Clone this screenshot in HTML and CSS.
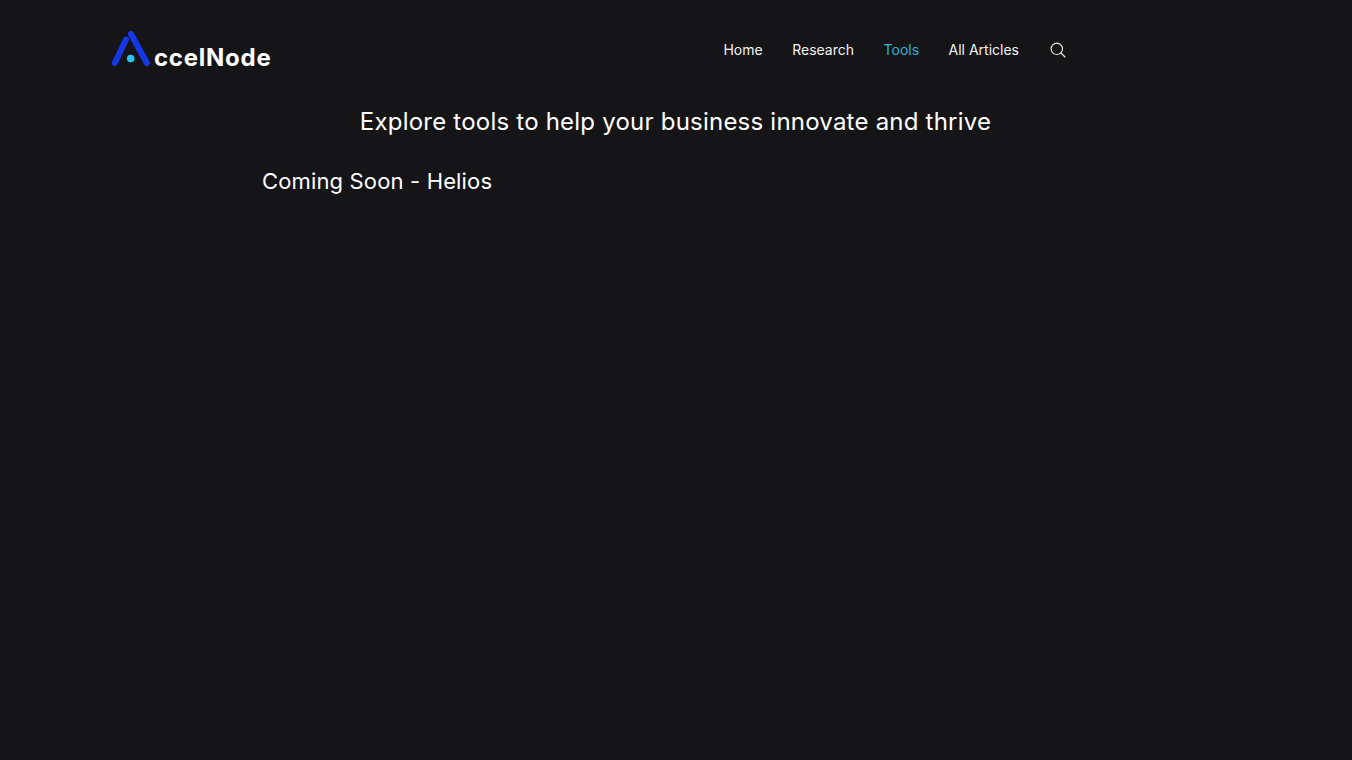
FILE: index.html
```html
<!DOCTYPE html>
<html lang="en">
<head>
<meta charset="utf-8">
<title>AccelNode Tools</title>
<link rel="stylesheet" href="styles.css">
</head>
<body>
<header class="header">
  <a class="logo" href="#">
    <svg class="logo-mark" width="40" height="38" viewBox="0 0 40 38" aria-hidden="true">
      <path d="M3.800 33 L15 9.500" class="logo-stroke"/>
      <path d="M20 4 L36 33.200" class="logo-stroke"/>
      <circle cx="19.700" cy="28.500" r="3.800" fill="#29c5f0"/>
    </svg>
    <span class="logo-text">ccelNode</span>
  </a>
  <nav class="nav">
    <a href="#">Home</a>
    <a href="#">Research</a>
    <a href="#" class="active">Tools</a>
    <a href="#">All Articles</a>
    <svg class="search" width="16" height="16" viewBox="0 0 16 16" aria-hidden="true">
      <circle cx="6.800" cy="6.800" r="5.700"/>
      <path d="M11 11 L15 15"/>
    </svg>
  </nav>
</header>
<main class="main">
  <h1 class="title">Explore tools to help your business innovate and thrive</h1>
  <h2 class="subtitle">Coming Soon - Helios</h2>
</main>
</body>
</html>
```
FILE: styles.css
```css
* { box-sizing: border-box; }
html, body { height: 100%; }
body {
  margin: 0;
  background: #151517;
  color: #fff;
  font-family: Inter, "Liberation Sans", sans-serif;
}
a { text-decoration: none; color: inherit; }
.header {
  display: flex;
  align-items: flex-start;
  justify-content: space-between;
  padding: 29px 286px 0 111px;
  height: 100px;
}
.logo { display: flex; align-items: flex-end; padding-top: 1px; }
.logo-stroke {
  fill: none;
  stroke: #1637e8;
  stroke-width: 6;
  stroke-linecap: round;
}
.logo-text {
  margin-left: 3px;
  margin-bottom: -5px;
  font-size: 24px;
  font-weight: 700;
  line-height: 30px;
  letter-spacing: 0.75px;
  color: #fff;
}
.nav {
  display: flex;
  align-items: center;
  gap: 29.500px;
  font-size: 14px;
  line-height: 42px;
  color: #f2f2f2;
}
.nav .active { color: #2fb4d6; }
.search { margin-left: 1.500px; fill: none; stroke: #eee; stroke-width: 1.100; stroke-linecap: round; }
.main { padding: 0 262px; }
.title {
  margin: 0;
  font-size: 24px;
  font-weight: 400;
  line-height: 44px;
  text-align: center;
  padding-right: 1px;
  letter-spacing: 0.22px;
}
.subtitle {
  margin: 21px 0 0;
  font-size: 22px;
  font-weight: 400;
  line-height: 32px;
  letter-spacing: 0.15px;
}
```
